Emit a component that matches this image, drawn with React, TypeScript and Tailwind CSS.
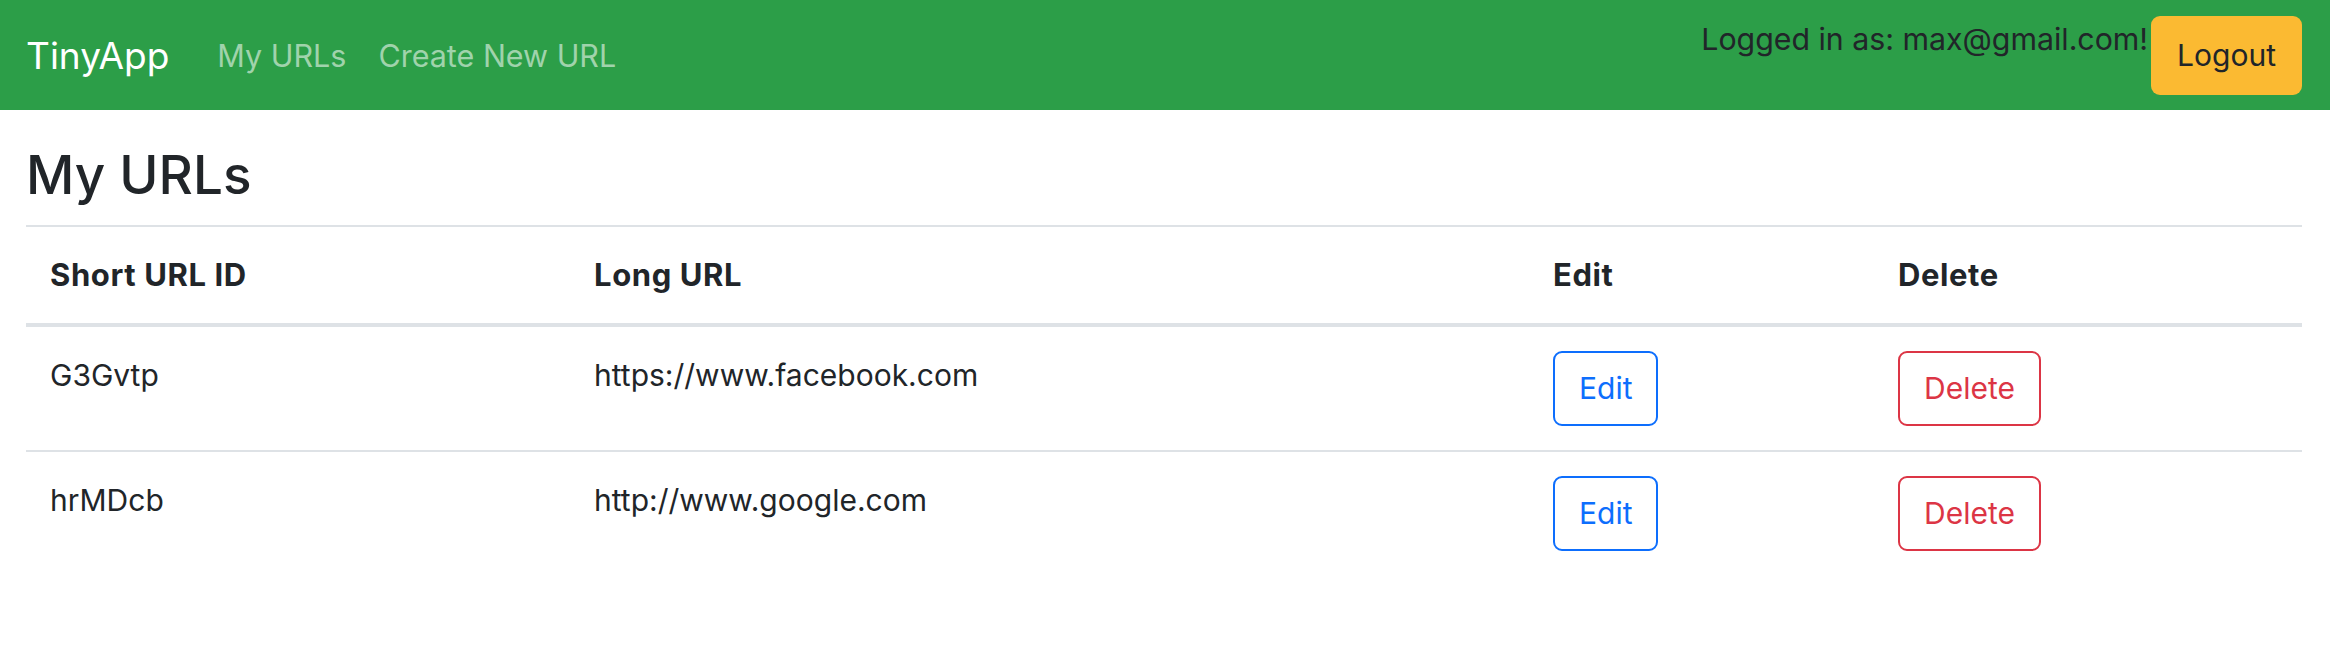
import React from "react";

interface UrlRow {
  id: string;
  longURL: string;
}

const urls: UrlRow[] = [
  { id: "G3Gvtp", longURL: "https://www.facebook.com" },
  { id: "hrMDcb", longURL: "http://www.google.com" },
];

export default function App() {
  return (
    <div className="min-h-screen bg-white font-['Inter','Noto_Sans',sans-serif] text-[#212529]">
      <nav className="flex h-[110px] items-center justify-between bg-[#2c9e48] pl-[26px] pr-[28px]">
        <div className="flex items-center">
          <a href="#" className="mr-[32px] text-[37px] leading-[57px] text-white">
            TinyApp
          </a>
          <a href="#" className="px-[16px] text-[30.5px] leading-[45px] text-[#a0d3ac]">
            My URLs
          </a>
          <a href="#" className="px-[16px] text-[30.5px] leading-[45px] text-[#a0d3ac]">
            Create New URL
          </a>
        </div>
        <div className="flex items-start gap-[3px]">
          <span className="pt-[2px] text-[30.3px] leading-[45px]">Logged in as: max@gmail.com!</span>
          <button className="mt-[1px] h-[79px] rounded-[9px] bg-[#fbba32] px-[26px] text-[30px] leading-[45px] text-[#212529]">
            Logout
          </button>
        </div>
      </nav>

      <main className="pl-[26px] pr-[28px]">
        <h1 className="mt-[34px] mb-[17px] text-[53px] font-medium leading-[1.2]">My URLs</h1>

        <table className="w-full border-collapse text-[30px] leading-[48px]">
          <thead>
            <tr className="border-t-2 border-b-4 border-[#dee2e6]">
              <th className="w-[544px] p-[24px] text-left text-[31px] font-bold tracking-[0.6px]">Short URL ID</th>
              <th className="w-[959px] p-[24px] text-left text-[31px] font-bold tracking-[0.6px]">Long URL</th>
              <th className="w-[345px] p-[24px] text-left text-[31px] font-bold tracking-[0.6px]">Edit</th>
              <th className="p-[24px] text-left text-[31px] font-bold tracking-[0.6px]">Delete</th>
            </tr>
          </thead>
          <tbody>
            {urls.map((url, i) => (
              <tr key={url.id} className={i > 0 ? "border-t-2 border-[#dee2e6]" : ""}>
                <td className="p-[24px] align-top">{url.id}</td>
                <td className="p-[24px] align-top">{url.longURL}</td>
                <td className="p-[24px] align-top">
                  <button className="h-[75px] rounded-[9px] border-2 border-[#0d6efd] px-[24px] text-[30px] text-[#0d6efd]">
                    Edit
                  </button>
                </td>
                <td className="p-[24px] align-top">
                  <button className="h-[75px] rounded-[9px] border-2 border-[#dc3545] px-[24px] text-[30px] text-[#dc3545]">
                    Delete
                  </button>
                </td>
              </tr>
            ))}
          </tbody>
        </table>
      </main>
    </div>
  );
}
